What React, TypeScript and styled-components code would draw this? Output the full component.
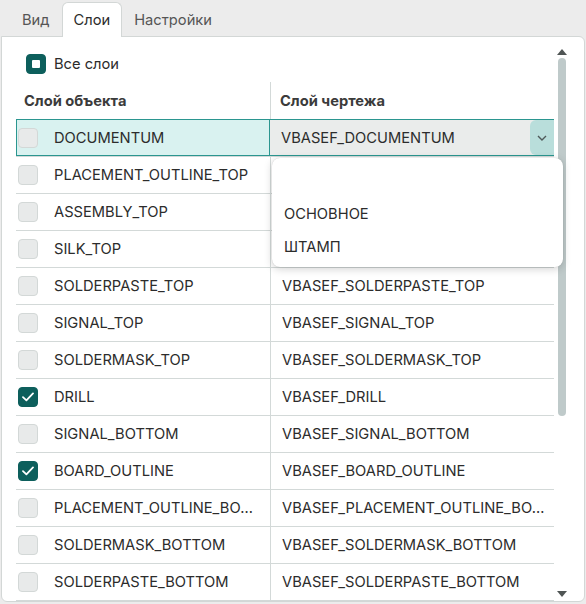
import { useState } from 'react';
import styled, { createGlobalStyle } from 'styled-components';

const GlobalStyle = createGlobalStyle`
  html, body {
    margin: 0;
    padding: 0;
    background: #ececec;
    font-family: Inter, "Noto Sans", sans-serif;
    color: #2c2c2c;
  }
`;

const Window = styled.div`
  width: 586px;
  height: 604px;
  display: flex;
  flex-direction: column;
  background: #ececec;
`;

const TabBar = styled.div`
  display: flex;
  align-items: flex-end;
  height: 36px;
  flex-shrink: 0;
  padding-left: 10px;
`;

const Tab = styled.div<{ $active?: boolean }>`
  height: 35px;
  box-sizing: border-box;
  padding: 0 11px;
  display: flex;
  align-items: center;
  font-size: 14.7px;
  color: ${({ $active }) => ($active ? '#2c2c2c' : '#555')};
  background: ${({ $active }) => ($active ? '#fff' : 'transparent')};
  border: 1px solid ${({ $active }) => ($active ? '#d3d7d6' : 'transparent')};
  border-bottom: none;
  border-radius: 6px 6px 0 0;
  margin-bottom: -1px;
  position: relative;
  z-index: 1;
`;

const Panel = styled.div`
  flex: 1;
  margin: 0 1px 2px;
  background: #fff;
  border: 1px solid #d3d7d6;
  border-radius: 0 6px 6px 6px;
  display: flex;
  overflow: hidden;
  min-height: 0;
`;

const Content = styled.div`
  flex: 1;
  padding-left: 14px;
  display: flex;
  flex-direction: column;
`;

const AllRow = styled.label`
  display: flex;
  align-items: center;
  flex-shrink: 0;
  gap: 8px;
  height: 44px;
  padding-left: 10px;
  padding-top: 10px;
  box-sizing: border-box;
  font-size: 14.7px;
`;

const Box = styled.span<{ $checked?: boolean }>`
  width: 20px;
  height: 20px;
  box-sizing: border-box;
  border-radius: 4px;
  flex-shrink: 0;
  display: flex;
  align-items: center;
  justify-content: center;
  background: ${({ $checked }) => ($checked ? '#0d5f5c' : '#e8eaea')};
  border: 1px solid ${({ $checked }) => ($checked ? '#0d5f5c' : '#d3d8d7')};
`;

const Dot = styled.span`
  width: 8px;
  height: 8px;
  background: #fff;
  border-radius: 1px;
`;

const Table = styled.div`
  width: 538px;
  flex-shrink: 0;
  display: flex;
  flex-direction: column;
`;

const Row = styled.div`
  display: grid;
  grid-template-columns: 254px 284px;
  flex-shrink: 0;
  height: 37px;
  border-bottom: 1px solid #d3d9d8;
  box-sizing: border-box;
  position: relative;
`;

const HeadRow = styled(Row)`
  height: 38px;
  margin-top: 1px;
`;

const HeadCell = styled.div<{ $first?: boolean }>`
  display: flex;
  align-items: center;
  padding-left: ${({ $first }) => ($first ? 8 : 9)}px;
  font-size: 14.7px;
  font-weight: 700;
  color: #3b3b3b;
  border-left: ${({ $first }) => ($first ? 'none' : '1px solid #d3d9d8')};
`;

const Cell = styled.div<{ $first?: boolean; $selected?: boolean }>`
  display: flex;
  align-items: center;
  gap: 16px;
  min-width: 0;
  padding-left: ${({ $first }) => ($first ? 2 : 11)}px;
  font-size: 14.7px;
  color: #2c2c2c;
  border-left: ${({ $first }) => ($first ? 'none' : '1px solid #d3d9d8')};
  box-sizing: border-box;
  ${({ $selected, $first }) =>
    $selected &&
    `
    background: ${$first ? '#d9f2f0' : '#eaeceb'};
    border: 1px solid #2b9690;
    border-right: ${$first ? '1px solid #2b9690' : 'none'};
    border-left: ${$first ? '1px solid #2b9690' : 'none'};
    padding-left: ${$first ? 1 : 11}px;
    margin-top: -1px;
    height: 37px;
  `}
`;

const Label = styled.span<{ $pad?: number }>`
  white-space: nowrap;
  overflow: hidden;
  text-overflow: ellipsis;
  padding-right: ${({ $pad }) => $pad ?? 12}px;
`;

const SelectValue = styled.span`
  flex: 1;
  white-space: nowrap;
  overflow: hidden;
`;

const ChevronButton = styled.span`
  width: 24px;
  align-self: stretch;
  background: #b9dedb;
  border-radius: 6px 0 0 6px;
  display: flex;
  align-items: center;
  justify-content: center;
`;

const Menu = styled.div`
  position: absolute;
  left: 256px;
  top: 38px;
  width: 291px;
  height: 109px;
  background: #fff;
  border-radius: 8px;
  box-shadow: 0 2px 8px rgba(0, 0, 0, 0.18), 0 0 1px rgba(0, 0, 0, 0.2);
  padding-top: 6px;
  box-sizing: border-box;
  z-index: 5;
`;

const MenuItem = styled.div`
  height: 33px;
  display: flex;
  align-items: center;
  padding-left: 12px;
  font-size: 14.7px;
  color: #2c2c2c;
`;

const ScrollBar = styled.div`
  width: 30px;
  flex-shrink: 0;
  display: flex;
  flex-direction: column;
  align-items: center;
  padding: 12px 14px 4px 0;
  box-sizing: border-box;
`;

const Thumb = styled.div`
  width: 8px;
  height: 358px;
  margin-top: 3px;
  background: #bfcaca;
  border-radius: 4px;
`;

const Spacer = styled.div`
  flex: 1;
`;

const Arrow = ({ up }: { up?: boolean }) => (
  <svg width="10" height="6" viewBox="0 0 10 6">
    <path d={up ? 'M5 0 L10 6 L0 6 Z' : 'M0 0 L10 0 L5 6 Z'} fill="#4f5554" />
  </svg>
);

const Check = () => (
  <svg width="12" height="10" viewBox="0 0 12 10">
    <path d="M1 5.2 L4.4 8.4 L11 1.4" stroke="#fff" strokeWidth="1.8" fill="none" strokeLinecap="round" strokeLinejoin="round" />
  </svg>
);

const Chevron = () => (
  <svg width="10" height="6" viewBox="0 0 10 6">
    <path d="M1 1 L5 5 L9 1" stroke="#4f5a5a" strokeWidth="1.4" fill="none" />
  </svg>
);

const layers = [
  ['DOCUMENTUM', 'VBASEF_DOCUMENTUM', false],
  ['PLACEMENT_OUTLINE_TOP', 'VBASEF_PLACEMENT_OUTLINE_TOP', false],
  ['ASSEMBLY_TOP', 'VBASEF_ASSEMBLY_TOP', false],
  ['SILK_TOP', 'VBASEF_SILK_TOP', false],
  ['SOLDERPASTE_TOP', 'VBASEF_SOLDERPASTE_TOP', false],
  ['SIGNAL_TOP', 'VBASEF_SIGNAL_TOP', false],
  ['SOLDERMASK_TOP', 'VBASEF_SOLDERMASK_TOP', false],
  ['DRILL', 'VBASEF_DRILL', true],
  ['SIGNAL_BOTTOM', 'VBASEF_SIGNAL_BOTTOM', false],
  ['BOARD_OUTLINE', 'VBASEF_BOARD_OUTLINE', true],
  ['PLACEMENT_OUTLINE_BOTTOM', 'VBASEF_PLACEMENT_OUTLINE_BOTTOM', false],
  ['SOLDERMASK_BOTTOM', 'VBASEF_SOLDERMASK_BOTTOM', false],
  ['SOLDERPASTE_BOTTOM', 'VBASEF_SOLDERPASTE_BOTTOM', false],
] as const;

export default function App() {
  const [tab] = useState('Слои');

  return (
    <Window>
      <GlobalStyle />
      <TabBar>
        {['Вид', 'Слои', 'Настройки'].map((t) => (
          <Tab key={t} $active={t === tab}>
            {t}
          </Tab>
        ))}
      </TabBar>
      <Panel>
        <Content>
          <AllRow>
            <Box $checked>
              <Dot />
            </Box>
            Все слои
          </AllRow>
          <Table>
            <HeadRow>
              <HeadCell $first>Слой объекта</HeadCell>
              <HeadCell>Слой чертежа</HeadCell>
            </HeadRow>
            {layers.map(([obj, draw, checked], i) => {
              const selected = i === 0;
              return (
                <Row key={obj}>
                  <Cell $first $selected={selected}>
                    <Box $checked={checked}>{checked && <Check />}</Box>
                    <Label $pad={16}>{obj}</Label>
                  </Cell>
                  {selected ? (
                    <Cell $selected>
                      <SelectValue>{draw}</SelectValue>
                      <ChevronButton>
                        <Chevron />
                      </ChevronButton>
                    </Cell>
                  ) : (
                    <Cell>
                      <Label $pad={6}>{draw}</Label>
                    </Cell>
                  )}
                  {selected && (
                    <Menu>
                      <MenuItem />
                      <MenuItem>ОСНОВНОЕ</MenuItem>
                      <MenuItem>ШТАМП</MenuItem>
                    </Menu>
                  )}
                </Row>
              );
            })}
          </Table>
        </Content>
        <ScrollBar>
          <Arrow up />
          <Thumb />
          <Spacer />
          <Arrow />
        </ScrollBar>
      </Panel>
    </Window>
  );
}
